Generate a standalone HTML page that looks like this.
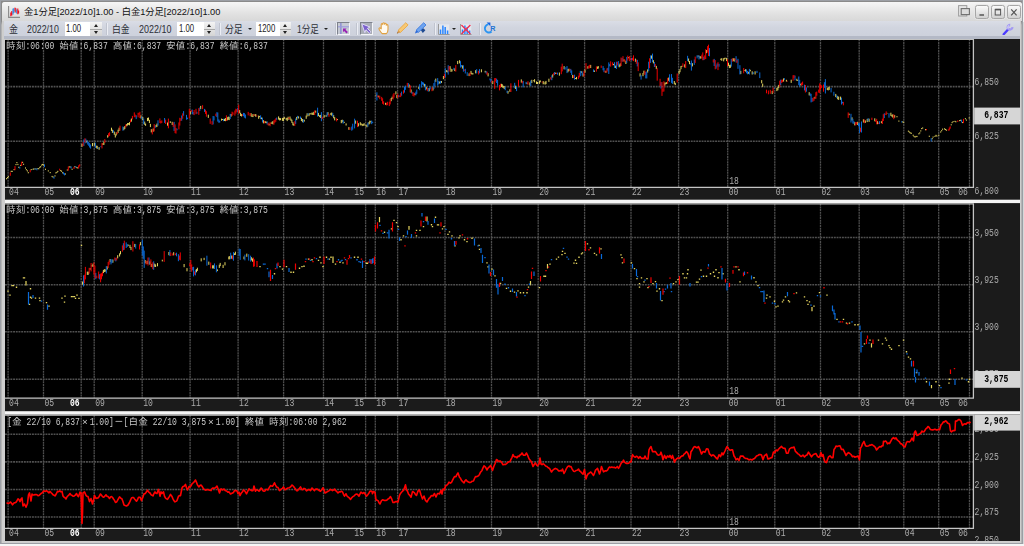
<!DOCTYPE html>
<html lang="ja"><head><meta charset="utf-8"><title>金1分足</title>
<style>
html,body{margin:0;padding:0}
body{width:1024px;height:546px;overflow:hidden;background:#d8d8d8;position:relative;font-family:"Liberation Sans","Noto Sans CJK JP",sans-serif}
.abs{position:absolute}
#win{left:0;top:0;width:1022.7px;height:543.8px;background:#9c9fa5}
#winin{left:1.2px;top:1.2px;width:1021.2px;height:542.3px;background:linear-gradient(#8a8a8a,#8a8a8a 20px,#b4b4b4 24px)}
#frame{left:1.7px;top:2.2px;width:1019.5px;height:540.9px;background:#cecece;border-radius:2.5px 2.5px 0 0}
#title{left:2.2px;top:2.2px;width:1019.6px;height:18.4px;border-radius:2.5px 2.5px 0 0;background:linear-gradient(#f6f6f6 0%,#ececec 30%,#e2e2e2 60%,#d8d8d8 100%)}
#ttext{left:23.7px;top:5.6px;font-size:9px;line-height:12px;color:#111;white-space:nowrap;transform-origin:0 0}
#tool{left:4.4px;top:20.6px;width:1015.8px;height:16px;background:linear-gradient(#dadde6,#d1d5df 40%,#cdd1dc)}
#tool2{left:4.4px;top:36.4px;width:1015.8px;height:2.4px;background:#b4b9c6}
.tt{position:absolute;top:24.2px;font-size:10.2px;line-height:12px;color:#2c2f36;white-space:nowrap;transform-origin:0 0}
.box{position:absolute;top:22.2px;height:13.6px;background:#fff}
.box span{position:absolute;left:1.5px;top:0.7px;font-size:10.6px;line-height:11px;color:#222;transform-origin:0 0;transform:scale(.73,1)}
.spin{position:absolute;top:22.2px;height:13.6px;background:linear-gradient(#f4f4f4,#d4d4d4)}
.spin:before{content:"";position:absolute;left:50%;top:2.2px;margin-left:-2.3px;border:2.3px solid transparent;border-top:0;border-bottom:3px solid #222}
.spin:after{content:"";position:absolute;left:50%;bottom:2.2px;margin-left:-2.3px;border:2.3px solid transparent;border-bottom:0;border-top:3px solid #222}
.spin i{position:absolute;left:0;right:0;top:6.4px;height:0.9px;background:#a8a8a8}
.sep{position:absolute;top:23.3px;height:11.5px;width:1.1px;background:#eceef4;box-shadow:-1px 0 0 #c0c4cf}
.dd{position:absolute;top:27.6px;border:2.2px solid transparent;border-bottom:0;border-top:2.6px solid #222}
.btn{position:absolute;top:4.5px;width:13.4px;height:14px;border-radius:2.4px;border:0.9px solid #a6a6a6;box-sizing:border-box;background:linear-gradient(#fafafa,#e8e8e8 45%,#d0d0d0);box-shadow:0 0 0 .7px #e8e8e8}
.ib{position:absolute;top:22.2px;height:12.8px;box-sizing:border-box}
</style></head><body>
<div class="abs" style="left:0;top:544.4px;width:1024px;height:1.6px;background:#f6f6f6"></div><div class="abs" style="left:1022.7px;top:0;width:1.3px;height:22px;background:#f2f2f2"></div><div id="win" class="abs"></div><div id="winin" class="abs"></div><div id="frame" class="abs"></div>
<div id="title" class="abs"></div>
<svg class="abs" style="left:7.6px;top:5.6px" width="12" height="12" viewBox="0 0 12 12"><path d="M.6 0V11.4H12" stroke="#8a8a8a" stroke-width="1.1" fill="none"/><path d="M2.8 10.2V6.4M3.8 9.6V5" stroke="#f01020" stroke-width="1.1"/><path d="M5 8.6V2.6M5.9 7V2.2" stroke="#1b7be0" stroke-width="1"/><path d="M7 5.6V1.6M7.8 6.6V2" stroke="#f01020" stroke-width="1"/><path d="M8.8 7.6V3.4" stroke="#1b7be0" stroke-width="1"/><path d="M9.8 8.2V2.6M10.6 7.6V4.4" stroke="#f01020" stroke-width="1.1"/></svg>
<div id="ttext" class="abs" style="transform:scaleX(1.0276)">金1分足[2022/10]1.00 - 白金1分足[2022/10]1.00</div>
<!-- window buttons -->
<svg class="abs" style="left:957.6px;top:5.4px" width="12.4" height="12.4" viewBox="0 0 12.4 12.4"><rect x=".6" y=".6" width="8.2" height="10.4" fill="#e6e6e6" stroke="#9c9c9c" stroke-width="1"/><rect x="3.2" y="3.6" width="8.2" height="6" fill="#dcdcdc" stroke="#6e6e6e" stroke-width="1.1"/></svg>
<div class="btn" style="left:975.3px"><svg width="12" height="12" viewBox="0 0 12 12" style="position:absolute;left:0;top:0"><path d="M3.4 9H8" stroke="#555" stroke-width="1.5"/></svg></div>
<div class="btn" style="left:991.3px"><svg width="12" height="12" viewBox="0 0 12 12" style="position:absolute;left:0;top:0"><rect x="3.2" y="3.4" width="5.4" height="5.6" fill="none" stroke="#555" stroke-width="1"/><path d="M3.2 3.6H8.6" stroke="#555" stroke-width="1.6"/></svg></div>
<div class="btn" style="left:1007.2px"><svg width="12" height="12" viewBox="0 0 12 12" style="position:absolute;left:0;top:0"><path d="M3.2 3.4L8.6 9.4M8.6 3.4L3.2 9.4" stroke="#555" stroke-width="1.2"/></svg></div>
<!-- toolbar -->
<div id="tool" class="abs"></div><div id="tool2" class="abs"></div>
<div class="tt" id="t1" style="transform:scaleX(0.8834);left:8.8px">金</div>
<div class="tt" id="d1" style="transform:scaleX(0.8635);left:27px">2022/10</div>
<div class="box" style="left:64.6px;width:25.6px"><span>1.00</span></div><div class="spin" style="left:90.2px;width:11.8px"><i></i></div>
<div class="sep" style="left:107px"></div>
<div class="tt" id="t3" style="transform:scaleX(0.8638);left:112.4px">白金</div>
<div class="tt" id="d2" style="transform:scaleX(0.8798);left:139.4px">2022/10</div>
<div class="box" style="left:177px;width:26.8px"><span>1.00</span></div><div class="spin" style="left:203.8px;width:11.4px"><i></i></div>
<div class="sep" style="left:219.6px"></div>
<div class="tt" id="t5" style="transform:scaleX(0.8638);left:224.8px">分足</div><div class="dd" style="left:247.6px"></div>
<div class="box" style="left:256px;width:23.6px"><span>1200</span></div><div class="spin" style="left:279.6px;width:11.4px"><i></i></div>
<div class="tt" id="t6" style="transform:scaleX(0.8370);left:296.6px">1分足</div><div class="dd" style="left:324.2px"></div>
<div class="sep" style="left:335.6px"></div>
<div class="ib" style="left:337.4px;width:12.8px;background:#c6cad4;border:1px solid #7e828c;border-right-color:#f4f5f8;border-bottom-color:#f4f5f8"></div>
<svg class="abs" style="left:337.4px;top:22.2px" width="12.8" height="12.8" viewBox="0 0 12.8 12.8"><path d="M3.9 1V12" stroke="#7c7cd0" stroke-width="1.1"/><path d="M1 4.8H12" stroke="#9a9ade" stroke-width="1.1"/><path d="M6 6.6H9.6L8.5 7.7L10.9 10.1L9.5 11.5L7.1 9.1L6 10.2Z" fill="#9a22b4"/></svg>
<div class="sep" style="left:357.2px"></div>
<div class="ib" style="left:360.2px;width:12.8px;background:#a9adb7;border:1px solid #7e828c;border-right-color:#f4f5f8;border-bottom-color:#f4f5f8"></div>
<svg class="abs" style="left:360.2px;top:22.2px" width="12.8" height="12.8" viewBox="0 0 12.8 12.8"><path d="M1.8 1.8L10 5L7.4 6.4L10.8 9.8L9.4 11.2L6 7.8L4.8 10.6Z" fill="#7a60cc" stroke="#ddd8f6" stroke-width="1" stroke-linejoin="round"/></svg>
<svg class="abs" style="left:378px;top:22.4px" width="12" height="12.4" viewBox="0 0 12 12.4"><path d="M3.2 6.4V2.6Q3.2 1.6 4 1.6Q4.8 1.6 4.8 2.6V1.8Q4.8 .8 5.7 .8Q6.6 .8 6.6 1.8V2.2Q6.6 1.3 7.5 1.3Q8.3 1.3 8.3 2.3V3.2Q8.4 2.5 9.2 2.6Q10 2.8 10 3.8V7.6Q10 10.4 8.4 11.6H4.2Q3 10.4 1.6 8.2Q.4 6.4 1.4 5.9Q2.2 5.6 3.2 6.8Z" fill="#fffaf0" stroke="#e0a040" stroke-width="1.1" stroke-linejoin="round"/></svg>
<svg class="abs" style="left:396px;top:22.4px" width="12.6" height="12.4" viewBox="0 0 12.6 12.4"><path d="M9.8 .7L12.1 3L4.4 10.5L2.1 8.3Z" fill="#f7c874" stroke="#eaa844" stroke-width=".9"/><path d="M2.1 8.3L4.4 10.5L.9 11.6Z" fill="#d89a50"/><path d="M.9 11.6L1.5 10.2L2.3 11Z" fill="#705030"/></svg>
<svg class="abs" style="left:414.4px;top:22.4px" width="12.6" height="12.4" viewBox="0 0 12.6 12.4"><path d="M6.6 7.8L9.4 6.2L11.4 8.2L8.8 11Z" fill="#1f4a90"/><path d="M9.7 .7L12 3L4.5 10.3L2.2 8.1Z" fill="#6fa4f0" stroke="#3c7ce0" stroke-width=".9"/><path d="M2.2 8.1L4.5 10.3L.9 11.6Z" fill="#2f6cd8"/></svg>
<div class="sep" style="left:434.6px"></div>
<svg class="abs" style="left:438.2px;top:23.6px" width="11.6" height="11" viewBox="0 0 11.6 11"><rect x=".5" y=".3" width="10.8" height="10.2" fill="#e4e7ee"/><path d="M.5 0V10.5H11.6" stroke="#9a9a9a" stroke-width="1" fill="none"/><path d="M2.5 10V5.4M4.9 10V1.4M7.2 10V2.9M9.6 10V6.4" stroke="#2a86ff" stroke-width="1.5"/></svg>
<div class="dd" style="left:451.8px"></div>
<svg class="abs" style="left:460.4px;top:23.6px" width="11.6" height="11" viewBox="0 0 11.6 11"><rect x=".5" y=".3" width="10.8" height="10.2" fill="#e4e7ee"/><path d="M.5 0V10.5H11.6" stroke="#9a9a9a" stroke-width="1" fill="none"/><path d="M2.5 10V5.4M4.9 10V1.4M7.2 10V2.9M9.6 10V6.4" stroke="#2a86ff" stroke-width="1.5"/><path d="M1.4 1L10.4 10M10.4 1L1.4 10" stroke="#f03050" stroke-width="1.3"/></svg>
<div class="sep" style="left:480.2px"></div>
<svg class="abs" style="left:482.6px;top:22.4px" width="13" height="12.6" viewBox="0 0 13 12.6"><path d="M8.6 9.6A4.1 4.1 0 1 1 5.4 2.4" stroke="#2a94f2" stroke-width="1.9" fill="none"/><path d="M3.6 .6H7.4V4.2Z" fill="#1464e4"/><text x="7.3" y="9" font-family="Liberation Sans,sans-serif" font-weight="bold" font-size="7.2" fill="#2272d4">R</text></svg>
<svg class="abs" style="left:1002.2px;top:22.6px" width="12.6" height="12.6" viewBox="0 0 12.6 12.6"><path d="M1.7 11.2L6.3 6.2" stroke="#4c3cff" stroke-width="2.4" stroke-linecap="round"/><path d="M10.3 4.1A2.3 2.3 0 1 1 8.2 2" stroke="#a39af2" stroke-width="2.3" fill="none"/><path d="M6.1 5.6Q5.4 3.6 6.8 2.4" stroke="#ece8fc" stroke-width=".9" fill="none"/></svg>

<svg width="1015.2" height="502" viewBox="5 39 1015.2 502" style="position:absolute;left:5px;top:39px;will-change:transform"><style>.a{font-family:"Liberation Mono","IPAGothic",monospace;font-size:8.08px}.j{font-family:"Liberation Mono","IPAGothic",monospace;font-size:9.70px}</style><rect x="5" y="39" width="1015.2" height="502" fill="#1b1b1b"/><rect x="5" y="199.7" width="1015.2" height="3.4" fill="#f6f6f6"/><rect x="5" y="411.2" width="1015.2" height="3.4" fill="#f6f6f6"/><rect x="5.0" y="39.3" width="968.4" height="148.0" fill="#000"/><path d="M8.1 39.3V187.3M43.5 39.3V187.3M81.2 39.3V187.3M94.2 39.3V187.3M142.2 39.3V187.3M190.1 39.3V187.3M238.1 39.3V187.3M283.6 39.3V187.3M323.5 39.3V187.3M365.6 39.3V187.3M375.3 39.3V187.3M397.6 39.3V187.3M445.0 39.3V187.3M491.5 39.3V187.3M538.2 39.3V187.3M584.6 39.3V187.3M631.0 39.3V187.3M678.6 39.3V187.3M727.7 39.3V187.3M774.8 39.3V187.3M820.5 39.3V187.3M859.2 39.3V187.3M903.8 39.3V187.3M938.7 39.3V187.3M969.5 39.3V187.3" stroke="#4e4e4e" stroke-width="1.3" stroke-dasharray="2 0.65" fill="none"/><path d="M5.0 86.6H973.4M5.0 141.2H973.4" stroke="#505050" stroke-width="1.6" stroke-dasharray="1.9 0.8" fill="none"/><rect x="5.0" y="203.8" width="968.4" height="194.4" fill="#000"/><path d="M8.1 203.8V398.2M43.5 203.8V398.2M81.2 203.8V398.2M94.2 203.8V398.2M142.2 203.8V398.2M190.1 203.8V398.2M238.1 203.8V398.2M283.6 203.8V398.2M323.5 203.8V398.2M365.6 203.8V398.2M375.3 203.8V398.2M397.6 203.8V398.2M445.0 203.8V398.2M491.5 203.8V398.2M538.2 203.8V398.2M584.6 203.8V398.2M631.0 203.8V398.2M678.6 203.8V398.2M727.7 203.8V398.2M774.8 203.8V398.2M820.5 203.8V398.2M859.2 203.8V398.2M903.8 203.8V398.2M938.7 203.8V398.2M969.5 203.8V398.2" stroke="#4e4e4e" stroke-width="1.3" stroke-dasharray="2 0.65" fill="none"/><path d="M5.0 237.5H973.4M5.0 284.8H973.4M5.0 331.8H973.4M5.0 379.2H973.4" stroke="#505050" stroke-width="1.6" stroke-dasharray="1.9 0.8" fill="none"/><rect x="5.0" y="415.2" width="968.4" height="113.2" fill="#000"/><path d="M8.1 415.2V528.4M43.5 415.2V528.4M81.2 415.2V528.4M94.2 415.2V528.4M142.2 415.2V528.4M190.1 415.2V528.4M238.1 415.2V528.4M283.6 415.2V528.4M323.5 415.2V528.4M365.6 415.2V528.4M375.3 415.2V528.4M397.6 415.2V528.4M445.0 415.2V528.4M491.5 415.2V528.4M538.2 415.2V528.4M584.6 415.2V528.4M631.0 415.2V528.4M678.6 415.2V528.4M727.7 415.2V528.4M774.8 415.2V528.4M820.5 415.2V528.4M859.2 415.2V528.4M903.8 415.2V528.4M938.7 415.2V528.4M969.5 415.2V528.4" stroke="#4e4e4e" stroke-width="1.3" stroke-dasharray="2 0.65" fill="none"/><path d="M5.0 434.3H973.4M5.0 461.9H973.4M5.0 489.5H973.4M5.0 517.0H973.4" stroke="#505050" stroke-width="1.6" stroke-dasharray="1.9 0.8" fill="none"/><path d="M6.5 178.1V179.3M7.5 177.0V178.2M8.4 176.1V177.3M11.2 170.8V172.0M12.2 170.8V172.0M14.1 169.0V170.2M16.0 164.0V165.2M16.9 162.0V163.2M17.9 163.9V165.1M18.8 166.7V167.9M20.7 164.8V166.0M22.6 161.8V163.0M23.6 163.7V164.9M25.5 167.4V168.6M26.4 169.1V170.3M27.4 170.3V171.5M28.3 172.1V173.3M31.2 169.0V170.2M33.1 168.7V169.9M34.0 168.3V169.5M35.9 168.3V169.5M37.9 168.0V169.2M38.8 168.1V169.3M39.8 166.8V168.0M40.7 166.1V167.3M41.7 164.5V165.7M42.6 163.9V165.1M43.6 164.4V165.6M45.5 168.7V169.9M48.3 170.3V171.5M50.2 172.0V173.2M52.1 175.9V177.1M53.1 176.5V177.7M55.0 175.3V176.5M55.9 172.3V173.5M56.9 171.8V173.0M57.8 170.8V172.0M60.7 170.0V171.2M61.6 170.6V171.8M62.6 172.2V173.4M65.4 173.4V174.6M67.3 169.4V170.6M69.2 166.3V167.5M70.2 166.4V167.6M72.1 168.7V169.9M74.9 166.1V167.3M76.8 167.0V168.2M77.8 167.3V168.5M82.0 143.9V146.8M86.8 140.6V142.6M92.5 143.0V146.2M94.4 142.6V145.8M96.3 145.7V147.8M97.2 145.8V149.0M99.1 147.1V149.8M102.9 143.1V145.0M103.9 141.7V144.9M107.7 135.2V137.7M111.5 127.7V130.9M112.4 129.7V132.9M114.3 131.6V134.8M115.3 134.3V137.5M116.2 132.3V135.5M118.1 129.7V132.9M119.1 127.7V130.9M123.8 127.2V130.2M124.8 126.1V129.1M126.7 124.0V126.3M127.6 123.0V125.5M128.6 123.0V124.8M129.5 122.1V125.3M131.4 118.5V121.7M140.9 115.3V118.4M142.8 116.9V120.1M144.7 121.6V124.8M145.6 123.6V125.8M147.5 117.9V121.1M148.5 117.5V120.7M149.4 119.9V123.1M150.4 123.9V127.1M151.3 129.2V132.4M153.2 128.5V131.7M156.1 124.9V127.2M157.0 123.6V126.8M167.5 122.5V125.7M170.3 121.3V122.9M172.2 121.8V125.0M190.3 111.1V114.3M200.7 105.9V109.1M208.3 114.7V117.9M221.6 118.6V120.7M222.6 119.0V120.0M224.5 118.9V121.0M225.4 118.0V121.2M227.3 117.2V120.4M228.3 116.6V119.8M229.2 116.9V120.1M231.1 114.0V116.6M239.7 110.1V113.3M240.6 112.8V116.0M241.6 114.1V116.5M251.1 113.2V116.4M252.0 115.5V117.0M253.0 114.0V117.1M254.9 114.3V115.8M255.8 114.1V116.8M258.7 115.6V118.8M259.6 116.1V117.2M261.5 117.5V119.2M263.4 120.2V123.4M265.3 121.2V123.1M266.3 121.6V123.2M269.1 123.7V125.4M271.0 122.8V123.7M272.0 121.8V123.9M272.9 121.1V124.3M278.6 116.4V119.6M279.6 117.9V120.4M280.5 118.2V120.2M282.4 117.9V120.9M283.4 117.9V121.1M284.3 116.8V119.0M286.2 117.8V119.9M287.2 117.9V121.1M288.1 116.7V119.9M290.0 116.5V119.7M291.0 118.6V120.9M291.9 119.7V122.9M292.9 122.1V125.3M293.8 123.7V125.7M296.7 116.9V120.1M298.6 116.4V118.5M301.4 117.8V121.0M302.4 119.0V122.2M304.3 119.7V121.6M306.2 115.6V118.8M307.1 113.3V116.5M309.0 113.5V116.2M310.0 113.1V114.7M310.9 113.4V114.0M311.9 112.6V114.8M312.8 112.7V114.9M313.8 111.8V115.0M315.7 110.6V112.7M318.5 112.9V116.1M319.5 115.3V116.9M320.4 114.9V118.0M324.2 115.1V117.6M326.1 114.9V116.9M328.0 112.1V115.1M330.9 112.9V115.1M331.8 112.5V115.7M333.7 115.1V118.3M334.7 117.2V120.4M337.5 119.1V120.1M341.3 120.0V123.2M342.3 119.7V122.3M344.2 121.8V123.0M346.1 123.4V125.5M348.9 127.1V129.8M355.6 120.5V123.7M358.4 123.2V126.4M360.3 122.2V125.4M361.3 123.5V124.8M362.2 123.9V126.1M363.2 123.9V125.8M364.1 123.2V125.7M366.0 125.2V126.6M367.0 124.6V127.3M368.9 122.1V124.6M369.8 120.7V123.8M370.8 120.9V122.4M376.0 94.6V95.6M378.8 95.7V97.4M385.5 102.8V104.8M391.2 98.0V101.2M392.1 96.7V99.1M395.9 91.3V94.5M396.9 95.0V98.2M409.2 84.5V87.7M411.1 89.5V92.7M414.9 93.3V95.1M418.7 87.2V88.8M424.4 83.8V86.5M426.3 87.1V89.4M429.2 88.1V91.3M433.0 87.3V90.5M435.8 78.6V81.8M439.6 81.5V83.6M441.5 81.0V82.9M443.4 76.0V79.2M446.3 70.1V72.0M447.2 70.5V72.5M450.1 66.2V69.4M451.0 68.7V71.9M452.0 69.1V71.5M454.8 68.4V71.1M457.7 60.9V64.1M459.6 60.2V63.4M462.4 65.4V68.6M469.1 73.4V76.1M471.0 70.9V74.1M471.9 72.8V74.5M472.9 73.1V74.5M475.7 70.2V73.4M481.4 69.3V72.3M485.2 70.8V72.5M488.1 73.2V76.4M492.8 80.9V84.1M501.4 83.8V87.0M502.3 84.3V87.5M503.3 85.8V87.8M504.2 86.0V89.0M508.0 91.0V93.7M509.9 89.3V91.8M515.6 85.7V88.9M521.3 79.4V82.6M527.0 82.6V84.1M529.9 82.4V85.6M531.8 79.8V83.0M533.7 80.2V81.3M534.6 79.2V82.4M536.5 81.4V84.0M537.5 82.0V84.0M539.4 80.7V83.9M540.3 80.4V82.3M543.2 81.1V84.3M544.1 82.8V83.5M545.1 81.7V84.6M546.0 80.9V84.1M548.9 78.7V81.9M552.7 74.4V77.6M555.6 72.7V73.9M559.4 72.5V75.7M564.1 66.1V69.3M567.9 69.1V72.3M568.9 68.7V71.2M572.7 74.9V78.1M575.5 78.0V79.0M576.5 76.9V79.4M581.2 71.1V73.1M583.1 73.4V76.6M585.0 69.5V72.7M587.9 66.2V68.7M590.7 64.9V68.0M594.5 70.5V71.9M597.4 66.6V68.9M598.3 66.1V68.6M605.9 70.8V72.8M613.5 63.9V65.2M615.4 65.6V68.0M619.2 64.5V67.3M620.2 63.3V66.5M624.0 59.3V61.4M625.9 60.8V64.0M628.7 57.1V58.3M635.4 58.6V61.8M640.1 73.3V76.5M643.0 73.0V76.2M643.9 70.7V73.5M647.7 69.4V72.6M651.5 55.5V58.7M653.4 60.2V63.4M656.3 65.9V69.1M664.8 82.5V85.7M665.8 82.6V84.3M666.7 82.1V84.0M668.6 77.6V80.8M674.3 81.0V84.2M675.3 82.8V85.1M679.1 70.9V74.1M680.0 69.0V72.2M681.0 66.0V69.2M681.9 65.8V66.9M684.8 64.3V67.5M688.6 58.5V61.7M689.5 61.0V64.2M692.4 63.2V66.4M698.1 55.5V56.8M700.0 56.0V58.5M700.9 56.5V58.6M706.6 50.0V53.2M720.9 58.6V60.1M721.8 58.2V60.8M723.7 58.2V61.4M724.7 57.8V59.4M725.6 57.8V58.5M726.6 57.9V61.1M728.5 62.7V65.9M729.4 64.9V68.1M730.4 64.6V67.8M733.2 58.3V61.1M734.2 58.4V61.6M740.8 70.9V74.1M744.6 70.0V70.7M745.6 69.2V71.6M748.4 71.8V73.8M750.3 69.8V71.3M752.2 71.3V74.5M755.1 71.3V74.5M761.7 80.1V83.3M762.7 83.6V86.8M772.2 90.9V94.1M776.9 87.9V91.1M777.9 87.1V90.3M778.8 84.9V88.1M783.6 78.4V81.6M786.4 79.8V81.6M791.2 79.7V82.9M796.9 78.8V80.9M797.8 80.1V81.0M800.7 83.7V85.4M809.2 92.2V95.4M814.9 96.8V98.7M827.3 87.8V90.0M828.2 87.2V90.4M829.2 86.7V89.9M835.8 93.9V97.1M837.7 96.1V99.3M838.7 96.7V99.9M840.6 96.6V99.8M849.1 113.6V115.2M852.0 117.3V120.5M854.8 122.2V125.4M857.7 121.8V125.0M863.4 119.3V122.5M865.3 120.4V122.9M867.2 118.9V122.1M869.1 118.7V121.9M874.8 118.3V121.3M877.6 121.2V124.2M881.4 121.2V123.2M887.1 112.9V113.5M890.9 112.7V115.9M891.9 114.8V116.6M892.8 114.4V117.6M894.7 115.1V117.7M897.0 116.1V117.3M898.9 120.5V121.7M902.7 121.3V122.5M903.7 121.7V122.9M908.4 130.6V131.8M909.4 131.5V132.7M910.3 132.3V133.5M911.3 132.7V133.9M913.2 134.7V135.9M914.1 135.9V137.1M915.1 136.4V137.6M916.0 135.9V137.1M917.0 135.9V137.1M918.9 133.2V134.4M919.8 132.3V133.5M920.8 130.3V131.5M921.7 128.0V129.2M922.7 127.4V128.6M925.5 129.1V130.3M929.3 135.7V136.9M932.2 138.1V139.3M933.1 136.5V137.7M935.0 135.8V137.0M936.0 134.8V136.0M936.9 135.5V136.7M938.8 134.6V135.8M940.7 131.4V132.6M941.7 130.1V131.3M942.6 128.6V129.8M944.5 128.3V129.5M945.5 128.9V130.1M946.4 129.6V130.8M951.2 124.2V125.4M952.1 122.0V123.2M953.1 121.0V122.2M955.0 120.8V122.0M955.9 121.2V122.4M959.7 120.0V121.2M960.7 119.7V120.9M962.6 121.9V123.1M965.4 118.1V119.3M966.4 119.5V120.7M969.2 117.4V118.6" stroke="#e6d660" stroke-width="1.0" fill="none"/><path d="M19.8 166.7V168.6M35.0 168.3V169.6M36.9 168.3V170.3M44.5 164.4V167.1M54.0 176.5V178.7M63.5 172.2V174.4M64.5 173.2V175.4M71.1 166.4V168.5M75.9 166.1V167.6M83.9 139.4V145.9M85.8 138.7V143.3M87.7 140.6V144.6M88.7 142.0V145.8M89.6 143.1V147.5M90.6 144.5V148.6M95.3 142.7V147.9M98.2 147.7V148.9M101.0 146.1V147.2M113.4 130.3V132.8M122.9 126.5V130.7M136.2 115.3V119.1M141.8 116.5V118.9M143.7 118.6V124.2M155.1 125.7V127.9M158.0 120.3V125.6M164.6 118.0V122.9M174.1 121.9V130.9M177.0 128.6V130.3M181.7 115.5V120.7M183.6 111.1V115.7M186.5 114.9V119.7M187.4 117.6V119.2M192.2 109.5V114.1M193.1 112.0V114.6M196.9 111.8V113.8M199.8 107.5V111.0M204.5 108.9V111.9M213.1 116.0V124.4M214.0 116.3V120.4M216.9 112.2V117.1M217.8 112.5V121.6M218.8 119.4V122.7M219.7 120.7V122.6M223.5 118.8V121.2M230.2 113.9V119.0M237.8 107.9V112.2M243.5 112.9V116.2M244.4 113.1V117.6M245.4 114.5V118.4M260.6 115.3V119.2M262.5 117.6V122.4M267.2 121.4V124.6M276.7 117.6V119.9M295.7 118.5V123.9M297.6 115.8V118.4M300.5 116.5V119.0M303.3 119.4V122.8M308.1 113.4V115.0M317.6 107.7V116.6M321.4 112.1V121.2M327.1 112.2V116.6M332.8 113.1V116.7M343.2 120.0V123.7M351.8 126.6V130.7M352.7 123.7V129.7M354.6 118.7V128.4M367.9 122.6V126.7M371.7 120.6V124.2M372.7 121.8V123.1M376.9 92.3V100.5M398.8 95.1V97.2M401.6 91.6V95.7M404.5 86.7V92.6M405.4 85.7V89.8M408.3 83.0V87.1M412.1 91.8V94.0M415.9 91.7V95.3M416.8 89.6V93.9M419.7 84.2V90.2M421.6 81.2V87.3M422.5 82.1V84.6M423.5 82.5V85.5M425.4 84.2V90.3M428.2 88.0V91.6M430.1 86.7V89.4M433.9 83.1V89.0M434.9 79.8V86.0M437.7 78.1V85.7M438.7 81.1V84.3M440.6 80.9V83.7M445.3 68.2V77.3M448.2 65.2V74.6M453.9 67.8V70.0M460.5 61.2V67.6M461.5 65.0V66.8M463.4 65.3V71.7M465.3 68.8V73.5M467.2 72.2V75.9M476.7 69.1V73.3M479.5 69.1V73.3M486.2 71.1V73.7M490.0 78.4V80.3M490.9 78.9V82.3M496.6 78.7V83.0M497.6 79.9V85.8M505.2 86.8V90.2M507.1 90.6V92.9M514.7 82.8V88.2M516.6 86.9V91.1M523.2 80.9V87.3M526.1 81.9V84.2M530.8 80.5V86.1M551.8 75.4V80.2M554.6 72.0V75.0M557.5 72.6V74.7M565.1 67.2V69.7M566.0 67.7V68.3M567.0 66.1V73.1M570.8 68.9V72.8M571.7 70.4V75.0M574.6 74.7V79.8M580.3 70.9V76.2M582.2 71.4V75.5M593.6 69.4V72.0M603.1 66.1V70.3M604.0 68.0V72.2M607.8 67.9V70.7M608.8 62.4V74.0M609.7 64.1V66.3M614.5 62.2V67.9M616.4 61.7V69.0M618.3 61.0V66.6M622.1 58.1V61.6M626.8 56.9V62.8M631.6 58.0V60.5M637.3 59.8V66.4M641.1 75.2V79.6M645.8 72.0V78.4M646.8 71.4V78.4M648.7 61.7V71.1M650.6 55.4V62.9M652.5 53.6V62.1M654.4 62.0V67.0M661.0 82.2V88.5M669.6 74.3V81.9M671.5 74.1V82.9M672.4 77.8V83.9M687.6 55.8V61.1M690.5 63.3V64.5M691.4 60.5V70.6M694.3 59.5V64.9M697.1 55.3V58.4M699.0 55.3V59.5M703.8 56.7V60.1M709.5 48.1V56.3M714.2 58.9V66.0M716.1 65.4V68.7M717.1 63.5V66.6M719.0 63.8V66.7M731.3 58.9V66.6M736.1 56.2V62.4M738.0 58.8V68.8M739.9 65.2V74.4M746.5 69.4V73.3M747.5 70.9V74.3M749.4 68.9V74.5M753.2 72.2V74.2M757.0 70.8V73.0M759.8 72.4V78.1M774.1 87.9V89.0M780.7 79.7V85.2M784.5 78.2V79.8M795.0 75.6V80.3M798.8 76.5V85.1M799.7 79.9V86.7M804.5 84.7V90.4M806.4 87.4V91.7M810.2 93.4V96.1M811.1 93.8V102.4M812.1 97.8V101.8M824.4 82.2V87.8M825.4 79.1V93.5M831.1 88.0V92.4M833.9 91.8V95.7M836.8 95.1V98.1M841.5 97.7V104.5M842.5 101.8V103.4M851.0 113.8V122.5M852.9 118.8V123.5M853.9 121.2V123.8M858.6 123.2V126.4M859.6 123.2V133.0M861.5 121.5V132.5M868.1 118.2V121.1M879.5 121.2V124.1M884.3 113.3V118.1M889.0 113.2V117.7M901.8 121.2V122.5M931.2 138.2V141.5M961.6 119.7V122.5" stroke="#0a6ad8" stroke-width="1.0" fill="none"/><path d="M10.3 172.4V175.8M15.0 166.1V170.2M21.7 161.7V166.0M30.2 169.9V172.3M59.7 168.7V170.5M68.3 166.5V170.6M74.0 166.9V169.0M78.7 165.3V168.5M79.7 164.3V166.5M83.0 142.4V146.2M84.9 138.3V142.6M102.0 142.9V148.4M104.8 139.1V142.9M108.6 133.2V136.8M109.6 132.2V135.9M117.2 131.8V134.2M120.0 125.7V130.6M125.7 124.5V127.6M130.5 119.7V122.4M132.4 115.9V119.4M134.3 112.4V117.2M135.2 114.6V117.3M138.1 112.8V117.3M139.0 112.8V114.7M139.9 111.8V118.0M152.3 129.3V134.4M154.2 124.1V131.4M159.9 118.4V123.0M160.8 120.9V123.5M161.8 120.4V123.0M165.6 119.7V124.0M168.4 118.6V128.3M173.2 122.4V126.9M175.1 124.4V133.1M176.0 128.0V133.6M178.9 122.4V129.4M179.8 117.8V125.6M180.8 118.2V120.9M182.7 113.3V118.7M189.3 108.8V118.7M191.2 109.9V112.0M194.1 110.0V115.1M196.0 108.8V114.2M198.8 108.1V114.8M202.6 105.2V109.1M205.5 109.7V113.9M206.4 111.2V116.7M210.2 118.5V123.9M212.1 121.2V124.8M215.9 113.6V116.2M226.4 115.3V121.0M232.1 111.7V115.9M233.0 112.4V114.7M234.9 110.5V115.7M235.9 108.7V113.6M236.8 109.1V111.8M238.7 104.7V113.9M242.5 114.4V115.8M248.2 111.9V115.4M250.1 113.0V116.1M253.9 114.4V115.9M256.8 115.4V116.5M264.4 120.9V123.3M268.2 122.7V125.4M270.1 122.2V126.3M273.9 120.2V124.7M274.8 119.6V122.8M275.8 118.3V121.8M289.1 117.5V119.1M294.8 121.2V125.9M314.7 110.4V115.0M322.3 116.7V119.1M329.0 113.7V116.8M336.6 118.2V121.4M349.9 127.4V130.0M357.5 120.7V127.1M377.9 95.3V97.2M379.8 95.8V99.2M381.7 96.9V100.8M382.6 98.3V103.8M383.6 101.3V104.7M386.4 102.8V105.4M387.4 101.8V105.2M389.3 101.7V106.1M390.2 99.0V104.4M393.1 94.4V99.5M394.0 93.0V97.6M397.8 93.7V98.2M399.7 95.7V96.9M400.7 93.1V97.1M403.5 90.3V93.7M407.3 82.9V86.3M410.2 85.5V92.4M413.0 92.1V96.0M414.0 92.8V96.5M427.3 87.8V91.0M432.0 87.3V91.2M444.4 73.8V78.1M449.1 66.1V71.6M455.8 65.1V71.6M464.3 69.5V70.9M470.0 72.4V76.0M478.6 70.8V74.5M487.1 71.7V75.0M491.9 80.7V82.7M494.7 78.1V88.9M495.7 78.0V81.6M499.5 85.1V90.4M500.4 83.8V87.7M510.9 83.3V92.0M518.5 79.9V86.5M522.3 80.9V83.4M528.0 81.2V84.8M542.2 81.6V82.6M550.8 77.1V79.5M553.7 72.8V75.7M556.5 72.7V73.9M561.3 66.7V74.2M562.2 63.7V71.4M569.8 68.9V71.1M573.6 75.3V78.0M578.4 75.7V79.1M579.3 72.9V77.4M584.1 70.8V76.6M586.0 63.2V69.5M588.8 65.6V68.3M589.8 64.8V68.3M596.4 66.4V71.6M601.2 65.5V67.9M605.0 70.6V72.5M606.9 68.4V72.4M610.7 61.3V66.6M612.6 62.3V65.4M617.3 61.9V65.3M621.1 57.5V66.0M623.0 56.2V61.8M624.9 59.7V62.5M627.8 55.6V60.6M629.7 56.0V61.2M630.6 58.4V60.2M632.5 57.8V60.3M633.5 55.3V61.1M636.3 59.6V63.8M638.2 62.3V71.1M644.9 70.7V75.0M649.6 58.3V68.1M655.3 63.9V66.9M657.2 68.2V80.7M660.1 78.8V86.1M662.0 82.0V95.9M662.9 88.6V91.8M663.9 81.3V91.5M667.7 77.9V83.8M677.2 73.5V82.5M682.9 63.3V66.9M685.7 61.0V68.1M695.2 56.6V62.9M701.9 54.6V58.2M702.8 52.4V60.2M704.7 55.4V59.6M705.7 49.2V59.0M707.6 46.1V52.5M708.5 44.7V56.0M713.3 59.5V62.5M715.2 60.1V69.3M718.0 62.2V70.1M727.5 59.4V66.2M732.3 58.4V61.7M735.1 58.5V60.3M737.0 60.2V62.9M743.7 68.0V73.3M766.5 89.7V93.3M768.4 90.5V94.3M770.3 89.8V93.8M773.1 87.5V93.2M779.8 80.7V86.7M781.7 79.7V83.0M782.6 79.7V82.1M787.4 80.8V81.5M793.1 75.2V80.7M794.0 75.1V77.9M801.6 82.7V85.7M802.6 81.6V84.9M805.4 85.0V92.5M813.0 98.0V101.5M814.0 97.0V100.8M815.9 92.2V98.8M816.8 91.6V95.7M818.7 89.6V92.7M819.7 83.4V93.1M820.6 84.5V89.8M821.6 85.4V87.9M823.5 84.6V91.7M843.4 101.9V105.3M848.2 112.4V117.9M855.8 122.1V125.4M856.7 122.0V124.4M860.5 127.7V131.8M864.3 119.4V123.2M871.9 117.7V120.0M875.7 120.0V121.8M876.7 118.8V124.3M878.6 122.6V123.9M882.4 118.7V124.0M883.3 114.2V121.0M885.2 113.6V114.9M886.2 111.4V115.1M893.8 114.4V119.2M926.5 129.0V130.3M948.3 129.3V130.7M949.3 127.5V130.5M950.2 126.3V128.7M957.8 120.4V122.0M963.5 118.9V123.1" stroke="#f00000" stroke-width="1.0" fill="none"/><path d="M82.5 281.5V284.7M87.3 271.7V274.9M88.2 271.6V274.8M90.1 268.2V269.7M92.0 265.1V266.6M93.0 263.6V266.8M103.4 269.9V273.1M104.4 269.2V272.0M105.3 269.4V271.7M107.2 266.3V269.5M110.1 259.0V262.2M112.9 259.5V262.7M117.7 255.2V258.4M119.6 253.3V256.5M120.5 251.1V254.3M128.1 244.5V246.1M130.0 244.8V248.0M131.0 246.9V250.1M134.8 243.9V247.1M140.4 242.1V245.3M145.2 260.1V263.3M147.1 260.8V264.0M149.9 261.4V264.6M151.8 263.9V267.1M154.7 263.6V266.8M155.6 264.4V267.0M157.5 263.1V266.3M162.3 259.7V261.4M168.9 252.0V255.2M173.7 252.2V255.4M184.1 264.0V267.2M187.0 268.1V271.3M196.5 269.1V272.3M197.4 267.7V270.9M201.2 258.3V261.4M204.1 257.8V260.1M208.8 261.6V264.8M212.6 265.3V268.5M213.6 265.3V268.5M217.4 269.4V271.1M219.3 264.7V267.9M220.2 262.9V266.1M223.1 264.8V268.0M225.0 262.2V265.4M228.8 256.5V259.4M229.7 256.1V259.3M231.6 255.5V258.7M234.5 253.3V255.0M235.4 251.7V254.9M244.0 256.5V259.3M246.8 253.6V256.8M251.6 257.2V260.4M252.5 258.5V261.7" stroke="#e6d660" stroke-width="1.0" fill="none"/><path d="M83.5 275.3V286.5M95.8 272.9V279.2M99.6 274.2V279.4M106.3 266.2V273.4M111.0 259.3V264.4M112.0 259.4V263.1M115.8 257.9V261.4M123.4 243.2V250.2M126.2 242.4V248.0M127.2 244.1V246.9M135.7 244.1V248.6M142.3 239.8V255.5M143.3 246.4V258.8M144.2 250.6V267.9M149.0 257.5V264.3M153.7 261.3V269.8M169.9 250.1V256.1M176.5 252.7V256.3M178.4 254.2V261.2M192.7 267.1V270.3M193.6 266.8V276.4M195.5 269.7V275.4M206.9 255.7V265.7M214.5 263.4V269.0M216.4 265.3V272.3M230.7 252.7V259.1M233.5 252.1V260.7M239.2 248.6V255.8M240.2 249.0V259.9M244.9 254.6V260.4M248.7 254.2V260.6M250.6 255.7V261.6" stroke="#0a6ad8" stroke-width="1.0" fill="none"/><path d="M84.4 274.8V283.3M85.4 266.9V279.4M89.2 267.8V273.7M91.1 263.0V271.4M93.9 262.4V274.5M94.9 265.6V278.3M96.8 275.7V278.2M98.7 271.5V278.5M100.6 273.6V282.3M101.5 273.2V279.3M102.5 271.7V276.3M108.2 262.0V268.0M109.1 260.4V264.7M114.8 257.5V260.6M116.7 257.6V260.4M122.4 245.4V251.7M124.3 240.7V249.8M132.9 241.2V251.5M139.5 244.3V249.5M146.1 260.8V264.5M148.0 257.5V265.5M150.9 259.4V266.9M152.8 262.3V269.2M164.2 251.1V261.9M170.8 252.4V256.0M172.7 253.4V255.5M175.6 253.4V255.2M179.4 255.6V259.8M180.3 252.4V260.3M189.8 263.3V266.2M190.8 259.9V269.6M191.7 264.4V271.7M194.6 271.4V274.7M210.7 262.5V268.5M232.6 255.5V259.3M253.5 257.6V266.8M254.4 259.4V266.4" stroke="#f00000" stroke-width="1.0" fill="none"/><path d="M7.3 290.4h1.4v1.3h-1.4zM9.3 294.4h1.4v1.3h-1.4zM11.3 285.0h1.4v1.3h-1.4zM12.8 285.0h1.4v1.3h-1.4zM15.8 286.6h1.4v1.3h-1.4zM22.8 277.2h1.4v1.3h-1.4zM23.8 277.2h1.4v1.3h-1.4zM25.4 281.0h1.2v4.4h-1.2zM28.8 303.8h1.4v1.3h-1.4zM29.8 288.1h1.4v1.3h-1.4zM29.8 296.6h1.4v1.3h-1.4zM30.8 297.4h1.4v1.3h-1.4zM34.8 297.4h1.4v1.3h-1.4zM38.8 297.4h1.4v1.3h-1.4zM39.3 299.9h1.4v1.3h-1.4zM45.8 301.9h1.4v1.3h-1.4zM48.3 305.4h1.4v1.3h-1.4zM61.3 297.4h1.4v1.3h-1.4zM64.3 295.4h1.4v1.3h-1.4zM63.8 301.4h1.4v1.3h-1.4zM70.8 295.9h1.4v1.3h-1.4zM72.3 295.9h1.4v1.3h-1.4zM73.8 295.9h1.4v1.3h-1.4zM74.8 297.8h1.4v1.3h-1.4zM76.3 294.4h1.4v1.3h-1.4zM78.3 297.8h1.4v1.3h-1.4zM80.8 244.8h1.4v1.3h-1.4zM259.3 266.0h1.4v1.3h-1.4zM273.8 273.1h1.4v1.3h-1.4zM279.3 266.0h1.4v1.3h-1.4zM281.8 268.4h1.4v1.3h-1.4zM285.8 266.0h1.4v1.3h-1.4zM290.3 271.6h1.4v1.3h-1.4zM292.8 271.6h1.4v1.3h-1.4zM298.8 267.6h1.4v1.3h-1.4zM301.3 266.0h1.4v1.3h-1.4zM303.3 265.6h1.4v1.3h-1.4zM307.8 258.4h1.4v1.3h-1.4zM311.3 259.1h1.4v1.3h-1.4zM317.8 259.8h1.4v1.3h-1.4zM319.3 256.6h1.4v1.3h-1.4zM320.3 262.2h1.4v1.3h-1.4zM322.3 266.0h1.4v1.3h-1.4zM325.8 256.6h1.4v1.3h-1.4zM328.8 258.4h1.4v1.3h-1.4zM330.3 256.6h1.4v1.3h-1.4zM332.4 256.6h1.2v6.4h-1.2zM334.8 263.4h1.4v1.3h-1.4zM339.3 261.6h1.4v1.3h-1.4zM342.3 262.2h1.4v1.3h-1.4zM353.8 256.6h1.4v1.3h-1.4zM357.3 256.6h1.4v1.3h-1.4zM365.8 262.6h1.4v1.3h-1.4zM366.8 262.6h1.4v1.3h-1.4zM378.9 217.0h1.2v5.2h-1.2zM383.8 231.6h1.4v1.3h-1.4zM390.8 228.3h1.4v1.3h-1.4zM393.3 219.8h1.4v1.3h-1.4zM395.8 221.9h1.4v1.3h-1.4zM397.3 225.9h1.4v1.3h-1.4zM400.3 239.1h1.4v1.3h-1.4zM402.8 235.3h1.4v1.3h-1.4zM408.4 226.0h1.2v3.8h-1.2zM415.8 229.8h1.4v1.3h-1.4zM415.8 235.3h1.4v1.3h-1.4zM419.3 229.8h1.4v1.3h-1.4zM422.8 225.9h1.4v1.3h-1.4zM426.4 216.6h1.2v5.0h-1.2zM430.8 224.1h1.4v1.3h-1.4zM431.8 225.9h1.4v1.3h-1.4zM434.8 216.6h1.4v1.3h-1.4zM436.8 224.3h1.4v1.3h-1.4zM437.8 224.3h1.4v1.3h-1.4zM441.8 228.3h1.4v1.3h-1.4zM443.3 225.9h1.4v1.3h-1.4zM447.3 233.8h1.4v1.3h-1.4zM448.8 231.3h1.4v1.3h-1.4zM451.3 235.3h1.4v1.3h-1.4zM454.3 245.3h1.4v1.3h-1.4zM458.3 237.2h1.4v1.3h-1.4zM459.3 235.3h1.4v1.3h-1.4zM463.8 239.1h1.4v1.3h-1.4zM466.3 240.9h1.4v1.3h-1.4zM471.3 237.6h1.4v1.3h-1.4zM478.3 244.8h1.4v1.3h-1.4zM478.8 248.8h1.4v1.3h-1.4zM486.3 262.2h1.4v1.3h-1.4zM487.3 266.2h1.4v1.3h-1.4zM491.3 268.4h1.4v1.3h-1.4zM494.3 275.2h1.4v1.3h-1.4zM499.8 282.8h1.4v1.3h-1.4zM505.8 287.8h1.4v1.3h-1.4zM509.8 290.6h1.4v1.3h-1.4zM513.8 291.4h1.4v1.3h-1.4zM517.3 290.2h1.4v1.3h-1.4zM519.8 292.1h1.4v1.3h-1.4zM522.8 292.1h1.4v1.3h-1.4zM526.3 292.1h1.4v1.3h-1.4zM527.8 286.4h1.4v1.3h-1.4zM529.9 281.0h1.2v4.2h-1.2zM538.8 286.9h1.4v1.3h-1.4zM543.3 275.6h1.4v1.3h-1.4zM544.8 275.6h1.4v1.3h-1.4zM546.9 264.0h1.2v4.4h-1.2zM549.3 263.4h1.4v1.3h-1.4zM555.8 258.4h1.4v1.3h-1.4zM557.8 256.4h1.4v1.3h-1.4zM561.3 253.9h1.4v1.3h-1.4zM561.8 250.8h1.4v1.3h-1.4zM564.3 252.8h1.4v1.3h-1.4zM573.3 262.4h1.4v1.3h-1.4zM574.8 259.6h1.4v1.3h-1.4zM575.8 262.8h1.4v1.3h-1.4zM578.3 256.6h1.4v1.3h-1.4zM580.8 253.3h1.4v1.3h-1.4zM581.8 252.3h1.4v1.3h-1.4zM586.8 243.3h1.4v1.3h-1.4zM589.8 247.3h1.4v1.3h-1.4zM593.8 252.8h1.4v1.3h-1.4zM595.8 254.3h1.4v1.3h-1.4zM600.3 248.3h1.4v1.3h-1.4zM620.3 254.3h1.4v1.3h-1.4zM621.3 256.9h1.4v1.3h-1.4zM621.8 262.2h1.4v1.3h-1.4zM630.8 262.2h1.4v1.3h-1.4zM633.8 267.9h1.4v1.3h-1.4zM636.3 277.9h1.4v1.3h-1.4zM638.8 282.9h1.4v1.3h-1.4zM638.8 286.4h1.4v1.3h-1.4zM640.8 277.2h1.4v1.3h-1.4zM643.3 281.2h1.4v1.3h-1.4zM646.3 277.9h1.4v1.3h-1.4zM647.3 286.9h1.4v1.3h-1.4zM652.3 282.9h1.4v1.3h-1.4zM654.8 281.0h1.4v1.3h-1.4zM656.3 290.4h1.4v1.3h-1.4zM658.8 288.1h1.4v1.3h-1.4zM661.3 300.0h1.4v1.3h-1.4zM672.8 282.9h1.4v1.3h-1.4zM675.3 281.2h1.4v1.3h-1.4zM677.3 278.9h1.4v1.3h-1.4zM682.3 273.1h1.4v1.3h-1.4zM683.8 277.2h1.4v1.3h-1.4zM685.8 277.2h1.4v1.3h-1.4zM686.8 273.1h1.4v1.3h-1.4zM687.3 269.1h1.4v1.3h-1.4zM695.8 281.4h1.4v1.3h-1.4zM697.3 281.4h1.4v1.3h-1.4zM698.8 278.4h1.4v1.3h-1.4zM700.3 269.4h1.4v1.3h-1.4zM702.8 275.6h1.4v1.3h-1.4zM705.8 275.6h1.4v1.3h-1.4zM709.8 273.1h1.4v1.3h-1.4zM712.8 271.6h1.4v1.3h-1.4zM713.8 275.6h1.4v1.3h-1.4zM715.3 269.1h1.4v1.3h-1.4zM717.3 277.1h1.4v1.3h-1.4zM718.3 271.9h1.4v1.3h-1.4zM722.3 273.1h1.4v1.3h-1.4zM735.3 266.2h1.4v1.3h-1.4zM738.3 269.1h1.4v1.3h-1.4zM739.3 281.2h1.4v1.3h-1.4zM753.3 277.1h1.4v1.3h-1.4zM755.3 281.2h1.4v1.3h-1.4zM757.3 285.0h1.4v1.3h-1.4zM766.3 294.4h1.4v1.3h-1.4zM765.8 297.4h1.4v1.3h-1.4zM769.3 296.2h1.4v1.3h-1.4zM773.8 300.6h1.4v1.3h-1.4zM775.3 306.2h1.4v1.3h-1.4zM777.3 305.4h1.4v1.3h-1.4zM781.8 301.2h1.4v1.3h-1.4zM782.8 299.4h1.4v1.3h-1.4zM784.8 296.2h1.4v1.3h-1.4zM787.8 300.0h1.4v1.3h-1.4zM788.8 301.2h1.4v1.3h-1.4zM795.8 292.2h1.4v1.3h-1.4zM803.8 296.2h1.4v1.3h-1.4zM806.3 300.0h1.4v1.3h-1.4zM808.8 301.2h1.4v1.3h-1.4zM807.3 303.8h1.4v1.3h-1.4zM811.4 306.9h1.2v4.4h-1.2zM813.3 305.4h1.4v1.3h-1.4zM818.8 291.9h1.4v1.3h-1.4zM826.3 294.4h1.4v1.3h-1.4zM836.3 318.8h1.4v1.3h-1.4zM842.8 318.8h1.4v1.3h-1.4zM845.8 322.4h1.4v1.3h-1.4zM848.8 322.4h1.4v1.3h-1.4zM854.3 324.1h1.4v1.3h-1.4zM857.3 324.1h1.4v1.3h-1.4zM863.8 343.2h1.4v1.3h-1.4zM869.3 339.4h1.4v1.3h-1.4zM870.9 343.2h1.2v4.4h-1.2zM877.8 339.4h1.4v1.3h-1.4zM881.8 343.2h1.4v1.3h-1.4zM884.8 337.4h1.4v1.3h-1.4zM885.8 339.4h1.4v1.3h-1.4zM888.3 344.9h1.4v1.3h-1.4zM889.3 347.0h1.4v1.3h-1.4zM890.8 348.6h1.4v1.3h-1.4zM898.3 344.9h1.4v1.3h-1.4zM902.8 339.4h1.4v1.3h-1.4zM905.8 351.1h1.4v1.3h-1.4zM907.8 356.4h1.4v1.3h-1.4zM909.8 358.2h1.4v1.3h-1.4zM915.8 372.0h1.4v1.3h-1.4zM925.8 381.1h1.4v1.3h-1.4zM930.9 385.0h1.2v3.2h-1.2zM935.3 381.1h1.4v1.3h-1.4zM938.8 384.9h1.4v1.3h-1.4zM948.3 382.4h1.4v1.3h-1.4zM948.8 378.6h1.4v1.3h-1.4zM961.3 377.4h1.4v1.3h-1.4zM967.8 381.1h1.4v1.3h-1.4zM968.8 378.6h1.4v1.3h-1.4z" fill="#e6d660"/><path d="M27.9 292.0h1.2v12.4h-1.2zM32.4 295.0h1.2v3.0h-1.2zM40.8 300.4h1.4v1.3h-1.4zM46.9 304.4h1.2v5.4h-1.2zM262.8 263.4h1.4v1.3h-1.4zM264.3 263.4h1.4v1.3h-1.4zM266.8 267.9h1.4v1.3h-1.4zM268.4 271.6h1.2v5.6h-1.2zM271.9 275.0h1.2v4.0h-1.2zM276.4 263.5h1.2v5.0h-1.2zM288.4 268.0h1.2v4.0h-1.2zM305.3 258.4h1.4v1.3h-1.4zM309.8 259.8h1.4v1.3h-1.4zM315.8 257.9h1.4v1.3h-1.4zM327.3 258.4h1.4v1.3h-1.4zM337.8 259.1h1.4v1.3h-1.4zM340.3 260.4h1.4v1.3h-1.4zM341.3 259.8h1.4v1.3h-1.4zM344.8 258.9h1.4v1.3h-1.4zM350.3 257.2h1.4v1.3h-1.4zM356.3 259.1h1.4v1.3h-1.4zM358.3 261.0h1.4v1.3h-1.4zM359.8 261.6h1.4v1.3h-1.4zM361.9 260.4h1.2v7.6h-1.2zM369.4 259.0h1.2v4.0h-1.2zM371.4 259.0h1.2v5.0h-1.2zM372.4 258.0h1.2v5.0h-1.2zM379.3 224.8h1.4v1.3h-1.4zM382.3 232.8h1.4v1.3h-1.4zM386.8 232.2h1.4v1.3h-1.4zM388.4 229.8h1.2v8.8h-1.2zM397.8 228.8h1.4v1.3h-1.4zM398.9 237.2h1.2v3.8h-1.2zM405.3 235.9h1.4v1.3h-1.4zM406.9 230.4h1.2v4.3h-1.2zM410.9 234.0h1.2v4.0h-1.2zM421.4 212.9h1.2v3.7h-1.2zM422.8 220.9h1.4v1.3h-1.4zM427.4 221.0h1.2v3.8h-1.2zM433.9 218.5h1.2v4.4h-1.2zM445.3 228.8h1.4v1.3h-1.4zM450.8 238.1h1.4v1.3h-1.4zM453.9 241.0h1.2v5.0h-1.2zM473.9 238.5h1.2v6.9h-1.2zM477.3 245.3h1.4v1.3h-1.4zM480.4 247.9h1.2v5.0h-1.2zM481.9 254.8h1.2v8.1h-1.2zM484.3 256.9h1.4v1.3h-1.4zM488.4 264.6h1.2v8.8h-1.2zM492.9 269.6h1.2v5.6h-1.2zM495.9 279.0h1.2v8.8h-1.2zM497.4 284.6h1.2v10.0h-1.2zM501.9 277.0h1.2v4.0h-1.2zM504.3 283.6h1.4v1.3h-1.4zM507.8 287.1h1.4v1.3h-1.4zM511.9 288.4h1.2v3.6h-1.2zM515.9 292.0h1.2v4.5h-1.2zM524.3 294.9h1.4v1.3h-1.4zM528.8 283.6h1.4v1.3h-1.4zM533.4 271.5h1.2v4.5h-1.2zM550.8 259.0h1.4v1.3h-1.4zM562.8 247.8h1.4v1.3h-1.4zM566.3 256.4h1.4v1.3h-1.4zM567.8 258.4h1.4v1.3h-1.4zM600.9 254.0h1.2v5.0h-1.2zM631.9 264.0h1.2v4.5h-1.2zM635.9 269.0h1.2v7.0h-1.2zM636.8 276.0h1.4v1.3h-1.4zM644.3 279.4h1.4v1.3h-1.4zM655.9 283.0h1.2v5.5h-1.2zM659.9 291.0h1.2v9.4h-1.2zM663.3 291.0h1.4v1.3h-1.4zM664.8 288.4h1.4v1.3h-1.4zM666.9 284.8h1.2v3.8h-1.2zM670.4 283.0h1.2v5.5h-1.2zM670.8 291.0h1.4v1.3h-1.4zM689.4 283.0h1.2v3.6h-1.2zM700.8 275.9h1.4v1.3h-1.4zM707.9 264.0h1.2v2.5h-1.2zM721.4 268.0h1.2v11.4h-1.2zM726.4 283.0h1.2v7.6h-1.2zM743.9 271.5h1.2v3.5h-1.2zM750.9 275.6h1.2v3.8h-1.2zM758.8 286.9h1.4v1.3h-1.4zM760.3 290.9h1.4v1.3h-1.4zM761.8 290.9h1.4v1.3h-1.4zM763.4 290.6h1.2v11.3h-1.2zM771.8 302.4h1.4v1.3h-1.4zM774.3 303.1h1.4v1.3h-1.4zM786.9 291.9h1.2v4.4h-1.2zM810.3 304.4h1.4v1.3h-1.4zM816.8 295.0h1.4v1.3h-1.4zM819.8 295.4h1.4v1.3h-1.4zM831.9 305.6h1.2v5.6h-1.2zM833.4 309.4h1.2v5.0h-1.2zM834.4 313.0h1.2v6.4h-1.2zM838.3 321.2h1.4v1.3h-1.4zM851.3 321.2h1.4v1.3h-1.4zM859.4 325.6h1.2v4.4h-1.2zM860.4 332.0h1.2v20.6h-1.2zM861.8 345.8h1.4v1.3h-1.4zM868.3 342.4h1.4v1.3h-1.4zM906.3 353.2h1.4v1.3h-1.4zM910.9 360.8h1.2v5.6h-1.2zM913.9 368.2h1.2v8.8h-1.2zM914.9 377.0h1.2v5.6h-1.2zM916.4 369.5h1.2v3.8h-1.2zM918.4 372.0h1.2v3.8h-1.2zM924.8 377.4h1.4v1.3h-1.4zM928.9 381.4h1.2v4.4h-1.2zM940.3 387.0h1.4v1.3h-1.4zM954.4 378.9h1.2v6.1h-1.2zM965.8 379.2h1.4v1.3h-1.4z" fill="#0a6ad8"/><path d="M256.4 261.0h1.2v6.0h-1.2zM269.9 269.8h1.2v11.2h-1.2zM274.8 267.9h1.4v1.3h-1.4zM277.4 262.5h1.2v3.5h-1.2zM283.4 259.8h1.2v7.5h-1.2zM294.9 263.5h1.2v6.2h-1.2zM304.8 261.0h1.4v1.3h-1.4zM308.8 258.4h1.4v1.3h-1.4zM312.3 261.0h1.4v1.3h-1.4zM313.8 257.2h1.4v1.3h-1.4zM323.4 256.6h1.2v7.4h-1.2zM336.3 261.0h1.4v1.3h-1.4zM343.8 257.2h1.4v1.3h-1.4zM346.4 259.8h1.2v5.0h-1.2zM347.8 257.9h1.4v1.3h-1.4zM348.9 255.0h1.2v3.0h-1.2zM360.8 258.4h1.4v1.3h-1.4zM363.3 261.0h1.4v1.3h-1.4zM367.8 261.4h1.4v1.3h-1.4zM370.4 260.0h1.2v4.0h-1.2zM373.9 256.6h1.2v8.1h-1.2zM374.9 224.8h1.2v6.8h-1.2zM376.9 222.2h1.2v6.2h-1.2zM380.8 230.3h1.4v1.3h-1.4zM391.9 222.2h1.2v9.3h-1.2zM404.3 245.3h1.4v1.3h-1.4zM414.8 232.2h1.4v1.3h-1.4zM420.4 220.4h1.2v6.2h-1.2zM424.9 216.6h1.2v4.4h-1.2zM439.3 232.2h1.4v1.3h-1.4zM440.4 222.2h1.2v4.3h-1.2zM455.4 241.0h1.2v3.8h-1.2zM461.8 234.3h1.4v1.3h-1.4zM466.8 238.1h1.4v1.3h-1.4zM489.9 272.0h1.2v4.0h-1.2zM498.9 282.8h1.2v4.2h-1.2zM516.3 296.4h1.4v1.3h-1.4zM526.8 289.0h1.4v1.3h-1.4zM530.9 271.5h1.2v7.5h-1.2zM531.8 267.8h1.4v1.3h-1.4zM539.9 276.0h1.2v5.5h-1.2zM545.3 269.9h1.4v1.3h-1.4zM547.8 266.4h1.4v1.3h-1.4zM584.9 241.0h1.2v10.0h-1.2zM588.3 249.1h1.4v1.3h-1.4zM598.9 247.2h1.2v6.2h-1.2zM623.4 258.5h1.2v4.5h-1.2zM648.3 286.0h1.4v1.3h-1.4zM650.4 277.2h1.2v5.8h-1.2zM662.4 288.5h1.2v6.2h-1.2zM669.3 277.4h1.4v1.3h-1.4zM678.9 276.0h1.2v8.8h-1.2zM707.3 267.4h1.4v1.3h-1.4zM720.3 266.2h1.4v1.3h-1.4zM724.9 278.8h1.2v3.8h-1.2zM728.9 283.0h1.2v4.0h-1.2zM732.4 270.0h1.2v3.8h-1.2zM733.3 266.2h1.4v1.3h-1.4zM737.3 266.2h1.4v1.3h-1.4zM742.9 272.5h1.2v3.8h-1.2zM746.8 272.1h1.4v1.3h-1.4zM764.3 302.4h1.4v1.3h-1.4zM793.3 292.9h1.4v1.3h-1.4zM823.3 287.1h1.4v1.3h-1.4zM839.8 321.2h1.4v1.3h-1.4zM841.8 321.2h1.4v1.3h-1.4zM846.8 323.1h1.4v1.3h-1.4zM865.9 338.9h1.2v5.0h-1.2zM866.9 335.6h1.2v3.1h-1.2zM872.4 339.5h1.2v4.4h-1.2zM912.9 360.8h1.2v5.6h-1.2zM949.9 369.5h1.2v4.4h-1.2zM953.8 368.0h1.4v1.3h-1.4z" fill="#f00000"/><path d="M6.5 503.2 7.5 503.0 8.5 503.5 9.5 502.8 10.5 502.0 11.5 503.2 12.5 504.8 14.0 502.9 15.0 502.7 16.0 502.2 17.0 500.7 18.0 498.8 19.0 499.6 20.0 501.6 21.0 499.1 22.0 497.9 23.0 506.0 24.5 504.0 26.0 507.2 27.5 503.5 28.5 494.8 29.5 492.9 31.0 501.0 32.0 494.0 33.0 495.0 34.0 495.0 35.0 494.6 36.0 494.5 37.0 494.8 38.0 495.8 39.0 495.4 40.2 494.3 41.5 493.2 42.5 492.6 43.5 491.0 44.5 491.1 45.5 491.4 46.5 490.8 47.5 491.4 49.0 492.9 50.0 491.4 51.0 492.6 52.0 493.5 53.0 494.8 54.0 495.2 55.0 496.0 56.2 494.0 57.5 491.4 58.6 491.6 59.8 490.8 60.9 491.8 62.0 491.4 63.0 496.0 64.0 497.1 65.0 497.7 66.0 499.0 67.2 496.5 68.5 495.4 70.0 493.5 71.0 494.9 72.0 495.3 73.0 496.2 74.0 496.1 75.0 495.4 76.5 493.5 77.5 495.6 78.5 496.6 80.0 492.2 81.0 492.9 82.0 523.5 82.5 513.5 83.0 492.9 84.5 491.9 86.0 495.4 87.0 496.3 88.0 496.6 89.5 501.6 91.0 498.5 92.5 504.0 93.5 500.3 94.5 495.4 96.0 498.5 97.0 498.1 98.0 497.9 99.2 496.4 100.5 494.0 101.5 495.2 102.5 496.6 103.5 497.2 104.5 496.6 106.0 494.8 107.0 496.2 108.0 496.6 109.5 498.5 110.5 497.0 111.5 496.6 112.5 497.3 113.5 499.0 114.5 500.4 115.5 502.5 116.5 502.1 117.5 500.4 118.5 498.6 119.5 496.9 120.8 498.1 122.0 499.0 123.0 501.7 124.0 505.0 125.2 505.5 126.5 506.0 128.0 505.0 129.5 502.5 130.5 500.1 131.5 498.0 132.5 497.5 133.5 497.5 134.5 498.9 135.5 500.1 136.5 501.2 137.5 499.8 138.5 497.2 140.0 497.2 141.5 500.6 142.8 497.4 144.0 493.8 145.0 493.7 146.0 492.5 147.5 490.2 148.8 492.1 150.0 493.0 151.0 494.7 152.0 495.2 153.0 496.0 154.0 493.5 155.0 491.9 156.0 493.2 157.0 493.5 158.5 489.4 160.0 496.2 161.0 491.9 162.0 493.5 163.5 491.9 164.5 496.2 165.5 498.0 166.5 498.9 167.5 499.4 168.5 497.8 169.5 496.4 170.5 494.4 171.8 496.2 173.0 498.8 174.0 500.8 175.0 501.9 176.0 501.4 177.0 500.6 178.5 496.2 179.5 495.6 180.5 495.6 182.0 488.0 183.0 486.5 184.0 486.2 185.5 484.4 186.5 487.7 187.5 490.0 189.0 486.5 190.0 486.9 191.0 485.9 192.0 483.9 193.0 483.0 194.2 481.9 195.5 480.0 196.5 482.4 197.5 485.0 199.0 486.9 200.0 485.5 201.0 485.0 202.0 486.2 203.0 488.0 204.0 489.1 205.0 490.0 206.0 490.2 207.2 489.4 208.5 489.8 209.8 490.3 211.0 490.6 212.0 488.7 213.0 488.0 214.2 488.2 215.5 487.8 217.0 486.0 218.2 489.3 219.5 493.0 221.0 488.8 222.5 490.0 224.0 489.0 225.2 490.5 226.5 491.0 227.8 492.1 229.0 491.9 230.5 494.0 231.5 493.5 232.5 493.0 233.5 492.5 234.5 490.6 235.8 490.5 237.0 491.0 238.0 493.8 239.0 492.2 240.0 495.6 241.2 493.1 242.3 492.0 243.5 490.0 244.5 490.6 245.5 492.1 246.5 493.8 247.8 491.1 249.0 488.8 250.2 489.8 251.5 490.6 253.0 490.6 254.0 486.0 255.5 491.2 256.0 490.0 257.0 489.9 258.0 490.2 259.0 491.2 260.0 490.1 261.0 488.0 262.0 488.8 263.0 490.8 264.0 491.2 265.0 490.9 266.0 489.4 267.0 489.5 268.0 490.0 269.2 487.7 270.5 485.6 271.5 486.0 272.5 486.2 273.5 484.7 274.5 482.8 275.5 485.0 276.5 486.9 278.0 487.5 279.5 490.6 280.5 489.8 281.5 488.9 282.5 488.4 283.5 486.9 285.0 489.8 286.0 489.2 287.0 488.5 288.0 488.0 289.2 487.8 290.5 486.9 292.0 485.0 293.2 486.0 294.5 487.8 295.5 488.9 296.5 490.6 297.5 490.7 298.5 489.4 299.5 488.2 300.5 486.9 302.0 489.8 303.0 489.5 304.0 488.4 305.0 488.8 306.5 490.9 307.8 490.0 309.0 489.4 310.5 490.6 312.0 488.0 313.2 489.4 314.5 490.6 315.8 489.1 317.0 489.0 318.5 490.0 319.5 490.8 320.5 491.2 321.8 489.7 323.0 487.8 324.0 489.8 325.0 493.0 326.0 492.6 327.0 491.8 328.0 491.2 329.2 490.6 330.5 489.4 331.5 489.8 332.5 490.6 333.5 490.1 334.5 489.0 335.5 490.5 336.5 491.2 338.0 493.0 339.2 491.8 340.5 491.9 341.5 491.3 342.5 491.9 343.5 494.3 344.5 496.2 346.0 493.8 347.0 496.0 348.0 496.9 349.2 497.8 350.5 499.4 351.5 498.1 352.5 496.9 353.8 496.1 355.0 495.0 356.0 494.2 357.0 494.0 358.0 494.9 359.0 496.2 360.0 494.0 361.0 492.2 362.5 493.5 364.0 492.5 365.2 494.2 366.5 496.2 368.0 494.4 369.0 493.0 370.0 491.2 371.0 491.1 372.0 491.5 372.5 493.8 373.5 491.5 375.0 492.2 376.0 500.0 377.0 500.1 378.0 500.6 379.0 502.7 380.0 504.0 381.5 500.6 382.8 499.8 384.0 500.4 385.0 500.5 386.0 500.4 387.0 500.1 388.0 498.9 389.0 498.5 390.5 496.6 391.8 499.2 393.0 502.5 394.2 502.5 395.5 501.6 396.8 501.6 398.0 502.2 399.5 495.4 400.5 493.4 401.5 492.2 402.5 491.2 403.5 490.4 404.5 487.9 405.5 484.8 406.5 489.8 407.5 491.3 408.5 494.0 409.8 495.4 411.0 497.2 412.5 491.6 413.5 492.0 414.5 492.9 415.5 494.6 416.5 495.4 418.0 491.0 419.5 490.0 421.0 494.8 422.5 499.0 424.0 496.0 425.5 500.4 427.0 502.0 428.0 500.2 429.0 498.5 430.0 497.7 431.0 496.0 432.0 495.5 433.0 496.0 434.5 493.5 436.0 497.0 437.5 493.5 438.5 493.5 439.5 494.0 441.0 490.4 442.0 494.0 443.0 489.0 444.5 489.8 445.5 486.0 446.8 485.2 448.0 484.0 449.0 482.2 450.5 483.2 451.5 482.4 452.5 480.4 453.5 478.4 454.5 476.6 456.0 476.6 457.0 474.4 458.0 472.9 459.5 477.2 460.5 478.3 461.5 480.4 462.8 481.7 464.0 482.9 465.0 480.9 466.0 479.8 467.2 481.3 468.5 482.0 469.8 482.6 471.0 482.2 472.2 481.2 473.5 481.0 474.5 478.5 475.5 476.6 476.5 476.7 477.5 476.2 478.5 475.8 479.5 474.4 480.5 472.2 482.0 470.4 483.0 467.9 484.0 465.8 485.5 467.2 487.0 470.0 488.0 468.1 489.0 467.2 490.5 465.4 491.5 467.6 492.5 470.4 494.0 466.0 495.2 463.2 496.5 459.5 497.5 460.2 498.5 461.6 500.0 461.0 501.5 462.2 503.0 464.8 504.2 464.4 505.5 464.5 506.8 463.3 508.0 462.2 509.0 461.8 510.0 461.6 511.0 459.4 512.0 457.5 513.0 454.6 514.0 456.4 515.0 457.0 516.0 456.9 517.0 457.8 518.0 456.1 519.0 456.5 520.0 455.0 521.0 454.5 522.0 453.0 523.5 455.2 525.0 455.2 526.5 453.0 528.0 456.2 529.0 458.8 530.0 460.0 531.5 462.0 533.0 466.5 534.2 464.5 535.5 462.8 536.5 465.0 537.5 465.9 539.0 464.0 540.0 458.0 541.0 464.0 542.0 464.7 543.0 463.8 544.0 464.2 545.0 465.3 546.0 466.2 547.0 466.5 548.2 467.7 549.5 468.4 550.5 470.2 551.5 472.0 552.5 470.5 553.5 469.6 554.5 468.8 555.5 468.4 556.5 468.9 557.5 469.5 558.5 470.9 559.5 471.0 560.5 470.6 561.5 470.9 562.5 469.0 564.0 473.4 565.2 471.3 566.5 468.4 567.8 466.5 569.0 465.9 570.0 466.8 571.0 466.5 572.2 469.1 573.5 471.2 574.8 471.5 576.0 470.5 577.2 470.3 578.5 469.0 579.5 470.8 580.5 471.5 581.8 473.0 583.0 474.2 584.5 469.6 586.0 479.0 587.0 475.8 588.0 474.0 589.2 473.3 590.5 472.0 591.5 472.7 592.5 474.1 593.5 475.5 594.5 473.1 595.5 470.2 596.5 469.4 597.5 468.4 598.5 471.1 599.5 474.0 600.5 470.9 601.5 466.5 602.5 469.3 603.5 471.8 604.5 471.2 605.5 470.8 606.5 470.9 607.5 470.1 608.5 468.3 609.5 467.0 610.7 467.6 611.8 467.1 613.0 467.5 614.2 467.3 615.5 468.0 616.5 467.3 617.5 466.5 618.5 468.4 619.5 466.9 620.5 464.6 621.5 462.7 622.5 462.1 623.5 460.2 624.5 462.2 625.5 463.0 626.7 463.4 627.8 463.5 629.0 463.0 630.0 461.8 631.0 462.0 632.5 454.6 633.5 456.0 634.5 457.0 635.5 457.1 636.5 456.2 637.5 456.7 638.5 458.4 640.0 456.6 641.5 458.5 642.8 458.2 644.0 458.5 645.0 456.0 646.5 459.0 648.0 459.0 649.0 449.8 650.0 447.9 651.0 446.6 652.5 451.6 653.5 451.6 654.5 451.5 655.5 451.6 656.5 453.1 657.5 454.8 658.8 455.1 660.0 454.8 661.0 452.2 662.0 455.3 663.0 459.8 664.5 455.4 666.0 458.5 667.5 456.0 669.0 457.2 670.0 455.4 671.5 458.5 672.5 455.4 673.5 458.2 674.5 462.2 675.5 460.1 676.5 459.0 678.0 457.9 679.5 458.5 681.0 456.6 682.0 455.8 683.0 456.0 684.0 454.1 685.0 453.5 686.5 451.6 688.0 453.5 689.0 456.9 690.0 459.0 691.0 451.6 692.0 450.5 693.0 448.5 694.0 447.0 695.0 446.6 696.0 447.3 697.0 447.9 698.5 446.6 700.0 449.8 701.5 454.0 703.0 451.6 704.0 451.7 705.0 452.2 706.5 448.8 708.0 449.0 709.5 454.0 710.5 454.7 711.5 456.0 713.0 454.8 714.0 455.5 715.0 456.6 716.2 458.0 717.5 459.0 719.0 454.8 720.5 456.6 722.0 452.9 723.0 454.8 724.0 453.0 725.0 451.0 726.0 448.6 727.0 446.6 728.0 447.6 729.0 449.5 730.5 450.4 731.5 449.8 732.5 449.8 734.0 456.0 735.0 457.3 736.0 459.8 737.5 458.5 739.0 460.4 740.5 456.0 741.8 456.1 743.0 456.0 744.5 457.9 745.8 458.5 747.0 458.5 748.0 459.1 749.0 460.0 750.0 459.4 751.0 459.5 752.0 460.0 753.2 459.1 754.5 458.5 755.5 457.4 756.5 456.0 757.8 455.6 759.0 454.5 760.2 454.6 761.5 455.0 763.0 459.8 764.5 455.4 765.5 455.1 766.5 454.0 768.0 458.9 769.0 458.7 770.0 458.2 771.0 457.8 772.0 457.6 773.5 452.0 775.0 452.6 776.0 450.0 777.5 450.8 778.5 449.3 779.5 448.2 780.5 447.3 781.5 446.4 782.5 447.6 783.5 448.2 785.0 448.2 786.5 453.2 788.0 453.2 789.5 448.9 790.8 448.1 792.0 447.6 793.0 447.6 794.0 447.0 795.5 451.4 796.8 452.6 798.0 453.9 799.0 454.4 800.0 455.6 801.0 456.4 802.0 456.0 803.0 455.0 804.5 457.0 805.8 455.4 807.0 455.0 808.5 452.2 810.0 454.5 811.5 456.8 812.5 455.5 813.5 454.5 814.8 453.9 816.0 453.5 817.5 456.4 818.5 457.2 819.5 457.0 821.0 452.6 822.0 456.4 823.0 454.5 824.5 460.8 825.5 462.3 826.5 462.6 827.5 459.6 828.5 457.0 830.0 455.8 831.5 457.6 833.0 457.6 834.0 449.5 835.0 448.3 836.0 446.0 837.2 446.4 838.5 446.0 840.0 445.8 841.5 449.5 843.0 449.2 844.5 452.0 846.0 455.5 847.2 453.7 848.5 452.6 849.8 453.5 851.0 454.5 852.5 456.8 853.7 456.2 854.8 457.2 856.0 456.8 857.0 456.6 858.0 456.0 859.5 460.0 860.5 448.2 861.5 446.6 862.5 443.9 864.0 441.4 865.5 445.8 866.8 446.3 868.0 446.0 869.0 445.7 870.0 445.0 871.0 445.1 872.0 444.5 873.2 445.5 874.5 446.4 875.5 447.6 876.5 450.0 877.5 448.9 878.5 447.6 879.8 446.6 881.0 447.0 882.0 445.9 883.0 445.8 883.5 441.4 884.5 441.6 885.5 441.0 886.5 441.8 887.5 443.9 888.5 443.1 889.5 443.5 891.0 440.8 892.2 438.6 893.5 437.6 895.0 438.9 896.0 437.8 897.2 439.9 898.5 441.0 899.5 441.9 900.5 443.6 901.8 443.9 903.0 445.5 904.0 446.7 905.0 447.0 906.5 442.4 907.5 441.5 908.5 441.8 909.5 441.9 910.5 441.0 912.0 438.0 913.5 440.8 914.5 432.4 915.5 431.0 917.0 435.5 918.2 435.1 919.5 434.2 920.8 433.1 922.0 431.0 923.0 432.0 924.0 431.8 925.0 430.3 926.0 428.6 927.0 428.0 928.0 426.5 929.0 427.1 930.0 429.0 931.2 429.8 932.5 429.9 933.8 429.6 935.0 429.2 936.2 429.9 937.5 429.9 938.5 429.3 939.5 429.9 941.0 424.9 942.2 423.7 943.5 421.8 944.5 421.9 945.5 420.9 946.5 421.3 947.5 423.0 948.5 423.4 949.5 424.2 950.5 431.0 951.5 431.8 953.0 430.5 954.0 430.6 955.0 430.5 955.5 421.0 956.5 421.2 957.5 420.5 958.5 419.6 959.5 419.5 961.0 421.0 962.5 425.5 964.0 424.0 965.0 423.7 966.0 424.2 967.0 423.0 968.0 422.4 969.5 423.0 970.5 421.8" stroke="#ff0000" stroke-width="1.6" stroke-linejoin="round" fill="none"/><path d="M5.0 39.3H973.4V187.3H5.0" stroke="#c4c4c4" stroke-width="1.3" fill="none"/><text class="a" transform="translate(9.10 194.70) scale(1 1.30)" fill="#acacac" xml:space="preserve">04</text><text class="a" transform="translate(44.50 194.70) scale(1 1.30)" fill="#acacac" xml:space="preserve">05</text><text class="a" transform="translate(69.90 194.70) scale(1 1.30)" fill="#ffffff" font-weight="bold" xml:space="preserve">06</text><text class="a" transform="translate(95.20 194.70) scale(1 1.30)" fill="#acacac" xml:space="preserve">09</text><text class="a" transform="translate(143.20 194.70) scale(1 1.30)" fill="#acacac" xml:space="preserve">10</text><text class="a" transform="translate(191.10 194.70) scale(1 1.30)" fill="#acacac" xml:space="preserve">11</text><text class="a" transform="translate(239.10 194.70) scale(1 1.30)" fill="#acacac" xml:space="preserve">12</text><text class="a" transform="translate(284.60 194.70) scale(1 1.30)" fill="#acacac" xml:space="preserve">13</text><text class="a" transform="translate(324.50 194.70) scale(1 1.30)" fill="#acacac" xml:space="preserve">14</text><text class="a" transform="translate(354.30 194.70) scale(1 1.30)" fill="#acacac" xml:space="preserve">15</text><text class="a" transform="translate(376.30 194.70) scale(1 1.30)" fill="#acacac" xml:space="preserve">16</text><text class="a" transform="translate(398.60 194.70) scale(1 1.30)" fill="#acacac" xml:space="preserve">17</text><text class="a" transform="translate(446.00 194.70) scale(1 1.30)" fill="#acacac" xml:space="preserve">18</text><text class="a" transform="translate(492.50 194.70) scale(1 1.30)" fill="#acacac" xml:space="preserve">19</text><text class="a" transform="translate(539.20 194.70) scale(1 1.30)" fill="#acacac" xml:space="preserve">20</text><text class="a" transform="translate(585.60 194.70) scale(1 1.30)" fill="#acacac" xml:space="preserve">21</text><text class="a" transform="translate(632.00 194.70) scale(1 1.30)" fill="#acacac" xml:space="preserve">22</text><text class="a" transform="translate(679.60 194.70) scale(1 1.30)" fill="#acacac" xml:space="preserve">23</text><text class="a" transform="translate(728.70 194.70) scale(1 1.30)" fill="#acacac" xml:space="preserve">00</text><text class="a" transform="translate(775.80 194.70) scale(1 1.30)" fill="#acacac" xml:space="preserve">01</text><text class="a" transform="translate(821.50 194.70) scale(1 1.30)" fill="#acacac" xml:space="preserve">02</text><text class="a" transform="translate(860.20 194.70) scale(1 1.30)" fill="#acacac" xml:space="preserve">03</text><text class="a" transform="translate(904.80 194.70) scale(1 1.30)" fill="#acacac" xml:space="preserve">04</text><text class="a" transform="translate(939.70 194.70) scale(1 1.30)" fill="#acacac" xml:space="preserve">05</text><text class="a" transform="translate(958.20 194.70) scale(1 1.30)" fill="#acacac" xml:space="preserve">06</text><text class="a" transform="translate(729.20 183.60) scale(1 1.30)" fill="#acacac" xml:space="preserve">18</text><text class="a" transform="translate(974.60 84.70) scale(1 1.30)" fill="#acacac" xml:space="preserve">6,850</text><text class="a" transform="translate(974.60 139.30) scale(1 1.30)" fill="#acacac" xml:space="preserve">6,825</text><text class="a" transform="translate(974.60 193.90) scale(1 1.30)" fill="#acacac" xml:space="preserve">6,800</text><path d="M5.0 203.8H973.4V398.2H5.0" stroke="#c4c4c4" stroke-width="1.3" fill="none"/><text class="a" transform="translate(9.10 405.60) scale(1 1.30)" fill="#acacac" xml:space="preserve">04</text><text class="a" transform="translate(44.50 405.60) scale(1 1.30)" fill="#acacac" xml:space="preserve">05</text><text class="a" transform="translate(69.90 405.60) scale(1 1.30)" fill="#ffffff" font-weight="bold" xml:space="preserve">06</text><text class="a" transform="translate(95.20 405.60) scale(1 1.30)" fill="#acacac" xml:space="preserve">09</text><text class="a" transform="translate(143.20 405.60) scale(1 1.30)" fill="#acacac" xml:space="preserve">10</text><text class="a" transform="translate(191.10 405.60) scale(1 1.30)" fill="#acacac" xml:space="preserve">11</text><text class="a" transform="translate(239.10 405.60) scale(1 1.30)" fill="#acacac" xml:space="preserve">12</text><text class="a" transform="translate(284.60 405.60) scale(1 1.30)" fill="#acacac" xml:space="preserve">13</text><text class="a" transform="translate(324.50 405.60) scale(1 1.30)" fill="#acacac" xml:space="preserve">14</text><text class="a" transform="translate(354.30 405.60) scale(1 1.30)" fill="#acacac" xml:space="preserve">15</text><text class="a" transform="translate(376.30 405.60) scale(1 1.30)" fill="#acacac" xml:space="preserve">16</text><text class="a" transform="translate(398.60 405.60) scale(1 1.30)" fill="#acacac" xml:space="preserve">17</text><text class="a" transform="translate(446.00 405.60) scale(1 1.30)" fill="#acacac" xml:space="preserve">18</text><text class="a" transform="translate(492.50 405.60) scale(1 1.30)" fill="#acacac" xml:space="preserve">19</text><text class="a" transform="translate(539.20 405.60) scale(1 1.30)" fill="#acacac" xml:space="preserve">20</text><text class="a" transform="translate(585.60 405.60) scale(1 1.30)" fill="#acacac" xml:space="preserve">21</text><text class="a" transform="translate(632.00 405.60) scale(1 1.30)" fill="#acacac" xml:space="preserve">22</text><text class="a" transform="translate(679.60 405.60) scale(1 1.30)" fill="#acacac" xml:space="preserve">23</text><text class="a" transform="translate(728.70 405.60) scale(1 1.30)" fill="#acacac" xml:space="preserve">00</text><text class="a" transform="translate(775.80 405.60) scale(1 1.30)" fill="#acacac" xml:space="preserve">01</text><text class="a" transform="translate(821.50 405.60) scale(1 1.30)" fill="#acacac" xml:space="preserve">02</text><text class="a" transform="translate(860.20 405.60) scale(1 1.30)" fill="#acacac" xml:space="preserve">03</text><text class="a" transform="translate(904.80 405.60) scale(1 1.30)" fill="#acacac" xml:space="preserve">04</text><text class="a" transform="translate(939.70 405.60) scale(1 1.30)" fill="#acacac" xml:space="preserve">05</text><text class="a" transform="translate(958.20 405.60) scale(1 1.30)" fill="#acacac" xml:space="preserve">06</text><text class="a" transform="translate(729.20 394.50) scale(1 1.30)" fill="#acacac" xml:space="preserve">18</text><text class="a" transform="translate(974.60 235.60) scale(1 1.30)" fill="#acacac" xml:space="preserve">3,950</text><text class="a" transform="translate(974.60 282.90) scale(1 1.30)" fill="#acacac" xml:space="preserve">3,925</text><text class="a" transform="translate(974.60 329.90) scale(1 1.30)" fill="#acacac" xml:space="preserve">3,900</text><text class="a" transform="translate(974.60 377.30) scale(1 1.30)" fill="#acacac" xml:space="preserve">3,875</text><path d="M5.0 415.2H973.4V528.4H5.0" stroke="#c4c4c4" stroke-width="1.3" fill="none"/><text class="a" transform="translate(9.10 535.80) scale(1 1.30)" fill="#acacac" xml:space="preserve">04</text><text class="a" transform="translate(44.50 535.80) scale(1 1.30)" fill="#acacac" xml:space="preserve">05</text><text class="a" transform="translate(69.90 535.80) scale(1 1.30)" fill="#ffffff" font-weight="bold" xml:space="preserve">06</text><text class="a" transform="translate(95.20 535.80) scale(1 1.30)" fill="#acacac" xml:space="preserve">09</text><text class="a" transform="translate(143.20 535.80) scale(1 1.30)" fill="#acacac" xml:space="preserve">10</text><text class="a" transform="translate(191.10 535.80) scale(1 1.30)" fill="#acacac" xml:space="preserve">11</text><text class="a" transform="translate(239.10 535.80) scale(1 1.30)" fill="#acacac" xml:space="preserve">12</text><text class="a" transform="translate(284.60 535.80) scale(1 1.30)" fill="#acacac" xml:space="preserve">13</text><text class="a" transform="translate(324.50 535.80) scale(1 1.30)" fill="#acacac" xml:space="preserve">14</text><text class="a" transform="translate(354.30 535.80) scale(1 1.30)" fill="#acacac" xml:space="preserve">15</text><text class="a" transform="translate(376.30 535.80) scale(1 1.30)" fill="#acacac" xml:space="preserve">16</text><text class="a" transform="translate(398.60 535.80) scale(1 1.30)" fill="#acacac" xml:space="preserve">17</text><text class="a" transform="translate(446.00 535.80) scale(1 1.30)" fill="#acacac" xml:space="preserve">18</text><text class="a" transform="translate(492.50 535.80) scale(1 1.30)" fill="#acacac" xml:space="preserve">19</text><text class="a" transform="translate(539.20 535.80) scale(1 1.30)" fill="#acacac" xml:space="preserve">20</text><text class="a" transform="translate(585.60 535.80) scale(1 1.30)" fill="#acacac" xml:space="preserve">21</text><text class="a" transform="translate(632.00 535.80) scale(1 1.30)" fill="#acacac" xml:space="preserve">22</text><text class="a" transform="translate(679.60 535.80) scale(1 1.30)" fill="#acacac" xml:space="preserve">23</text><text class="a" transform="translate(728.70 535.80) scale(1 1.30)" fill="#acacac" xml:space="preserve">00</text><text class="a" transform="translate(775.80 535.80) scale(1 1.30)" fill="#acacac" xml:space="preserve">01</text><text class="a" transform="translate(821.50 535.80) scale(1 1.30)" fill="#acacac" xml:space="preserve">02</text><text class="a" transform="translate(860.20 535.80) scale(1 1.30)" fill="#acacac" xml:space="preserve">03</text><text class="a" transform="translate(904.80 535.80) scale(1 1.30)" fill="#acacac" xml:space="preserve">04</text><text class="a" transform="translate(939.70 535.80) scale(1 1.30)" fill="#acacac" xml:space="preserve">05</text><text class="a" transform="translate(958.20 535.80) scale(1 1.30)" fill="#acacac" xml:space="preserve">06</text><text class="a" transform="translate(729.20 524.70) scale(1 1.30)" fill="#acacac" xml:space="preserve">18</text><text class="a" transform="translate(974.60 432.40) scale(1 1.30)" fill="#acacac" xml:space="preserve">2,950</text><text class="a" transform="translate(974.60 460.00) scale(1 1.30)" fill="#acacac" xml:space="preserve">2,925</text><text class="a" transform="translate(974.60 487.60) scale(1 1.30)" fill="#acacac" xml:space="preserve">2,900</text><text class="a" transform="translate(974.60 515.10) scale(1 1.30)" fill="#acacac" xml:space="preserve">2,875</text><text class="a" transform="translate(974.60 542.70) scale(1 1.30)" fill="#acacac" xml:space="preserve">2,850</text><text class="j" x="6.00" y="48.80" fill="#c8c8c8">時刻</text><text class="a" transform="translate(25.40 48.80) scale(1 1.30)" fill="#c8c8c8" xml:space="preserve">:06:00</text><text class="j" x="59.35" y="48.80" fill="#c8c8c8">始値</text><text class="a" transform="translate(78.75 48.80) scale(1 1.30)" fill="#c8c8c8" xml:space="preserve">:6,837</text><text class="j" x="112.70" y="48.80" fill="#c8c8c8">高値</text><text class="a" transform="translate(132.10 48.80) scale(1 1.30)" fill="#c8c8c8" xml:space="preserve">:6,837</text><text class="j" x="166.05" y="48.80" fill="#c8c8c8">安値</text><text class="a" transform="translate(185.45 48.80) scale(1 1.30)" fill="#c8c8c8" xml:space="preserve">:6,837</text><text class="j" x="219.40" y="48.80" fill="#c8c8c8">終値</text><text class="a" transform="translate(238.80 48.80) scale(1 1.30)" fill="#c8c8c8" xml:space="preserve">:6,837</text><text class="j" x="6.00" y="213.40" fill="#c8c8c8">時刻</text><text class="a" transform="translate(25.40 213.40) scale(1 1.30)" fill="#c8c8c8" xml:space="preserve">:06:00</text><text class="j" x="59.35" y="213.40" fill="#c8c8c8">始値</text><text class="a" transform="translate(78.75 213.40) scale(1 1.30)" fill="#c8c8c8" xml:space="preserve">:3,875</text><text class="j" x="112.70" y="213.40" fill="#c8c8c8">高値</text><text class="a" transform="translate(132.10 213.40) scale(1 1.30)" fill="#c8c8c8" xml:space="preserve">:3,875</text><text class="j" x="166.05" y="213.40" fill="#c8c8c8">安値</text><text class="a" transform="translate(185.45 213.40) scale(1 1.30)" fill="#c8c8c8" xml:space="preserve">:3,875</text><text class="j" x="219.40" y="213.40" fill="#c8c8c8">終値</text><text class="a" transform="translate(238.80 213.40) scale(1 1.30)" fill="#c8c8c8" xml:space="preserve">:3,875</text><text class="a" transform="translate(7.20 424.80) scale(1 1.30)" fill="#c8c8c8" xml:space="preserve">[</text><text class="j" x="12.05" y="424.80" fill="#c8c8c8">金</text><text class="a" transform="translate(26.60 424.80) scale(1 1.30)" fill="#c8c8c8" xml:space="preserve">22/10 6,837</text><text class="j" text-anchor="middle" x="84.80" y="424.80" fill="#c8c8c8">×</text><text class="a" transform="translate(89.65 424.80) scale(1 1.30)" fill="#c8c8c8" xml:space="preserve">1.00]</text><text class="j" x="113.90" y="424.80" fill="#c8c8c8">－</text><text class="a" transform="translate(123.60 424.80) scale(1 1.30)" fill="#c8c8c8" xml:space="preserve">[</text><text class="j" x="128.45" y="424.80" fill="#c8c8c8">白金</text><text class="a" transform="translate(152.70 424.80) scale(1 1.30)" fill="#c8c8c8" xml:space="preserve">22/10 3,875</text><text class="j" text-anchor="middle" x="210.90" y="424.80" fill="#c8c8c8">×</text><text class="a" transform="translate(215.75 424.80) scale(1 1.30)" fill="#c8c8c8" xml:space="preserve">1.00]</text><text class="j" x="244.85" y="424.80" fill="#c8c8c8">終値</text><text class="j" x="269.10" y="424.80" fill="#c8c8c8">時刻</text><text class="a" transform="translate(288.50 424.80) scale(1 1.30)" fill="#c8c8c8" xml:space="preserve">:06:00 2,962</text><rect x="974.2" y="107.6" width="46" height="16.8" fill="#d6d6d6"/><text class="a" transform="translate(984.20 118.20) scale(1 1.30)" fill="#000" font-weight="bold" xml:space="preserve">6,837</text><rect x="974.2" y="371.0" width="46" height="16.8" fill="#d6d6d6"/><text class="a" transform="translate(984.20 381.60) scale(1 1.30)" fill="#000" font-weight="bold" xml:space="preserve">3,875</text><rect x="974.2" y="414.8" width="46" height="15.8" fill="#d6d6d6"/><text class="a" transform="translate(984.20 424.40) scale(1 1.30)" fill="#000" font-weight="bold" xml:space="preserve">2,962</text></svg>
</body></html>
